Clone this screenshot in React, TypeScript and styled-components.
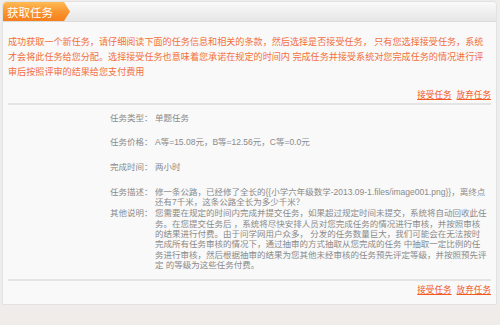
import React from "react";
import styled, { createGlobalStyle } from "styled-components";

const GlobalStyle = createGlobalStyle`
  html, body {
    margin: 0;
    padding: 0;
    background: #fff;
  }
  body {
    font-family: "Liberation Sans", "Noto Sans CJK SC", sans-serif;
  }
`;

const Page = styled.div`
  width: 500px;
  height: 325px;
  display: flex;
  flex-direction: column;
  background: #f0ecea;
  overflow: hidden;
`;

const Panel = styled.div`
  margin: 1px 3px 0 2px;
  border: 1px solid #e2e2e2;
  border-radius: 4px 4px 0 0;
  background: #f9f9f9;
  padding-bottom: 8px;
`;

const Header = styled.div`
  height: 19px;
  display: flex;
  align-items: stretch;
  background: linear-gradient(#fafafa, #e6e6e6);
  border-bottom: 1px solid #dcdcdc;
  border-radius: 4px 4px 0 0;
`;

const Tab = styled.div`
  width: 67px;
  padding-left: 4px;
  box-sizing: border-box;
  display: flex;
  align-items: center;
  color: #fff;
  font-size: 11.5px;
  background: linear-gradient(#fdbb55, #fa9630 50%, #f67e1c);
  clip-path: polygon(0 0, 61px 0, 67px 50%, 61px 100%, 0 100%);
  border-top-left-radius: 4px;
`;

const Intro = styled.p`
  margin: 0;
  padding: 13px 6px 0 5px;
  color: #f26f3c;
  font-size: 9.1px;
  line-height: 15px;
  white-space: nowrap;
`;

const Actions = styled.div`
  display: flex;
  justify-content: flex-end;
  gap: 5px;
  margin: 0 5px;
  padding: 9px 0 2px;
  border-bottom: 2px solid #e4e4e4;
`;

const ActionsBottom = styled.div`
  display: flex;
  justify-content: flex-end;
  gap: 5px;
  margin: 0 5px;
  padding-top: 3px;
  border-top: 2px solid #e4e4e4;
`;

const LinkText = styled.a`
  color: #f15a22;
  font-size: 8.6px;
  line-height: 12px;
  text-decoration: underline;
  cursor: pointer;
`;

const Fields = styled.div`
  display: flex;
  flex-direction: column;
  padding: 8px 6px 9px 107px;
`;

const Row = styled.div<{ $gap: number }>`
  display: flex;
  margin-bottom: ${(p) => p.$gap}px;
  font-size: 8.5px;
  line-height: 10.3px;
  color: #8a8a8a;
`;

const Label = styled.div`
  width: 45px;
  flex-shrink: 0;
  white-space: nowrap;
`;

const Value = styled.div`
  flex: 1;
`;

const Line = styled.div`
  white-space: nowrap;
`;

const notes = [
  "您需要在规定的时间内完成并提交任务，如果超过规定时间未提交，系统将自动回收此任",
  "务。在您提交任务后 ，系统将尽快安排人员对您完成任务的情况进行审核，并按照审核",
  "的结果进行付费。由于问学网用户众多， 分发的任务数量巨大，我们可能会在无法按时",
  "完成所有任务审核的情况下，通过抽审的方式抽取从您完成的任务 中抽取一定比例的任",
  "务进行审核，然后根据抽审的结果为您其他未经审核的任务预先评定等级，并按照预先评",
  "定 的等级为这些任务付费。",
];

const fields: { label: string; value: React.ReactNode; gap: number }[] = [
  { label: "任务类型：", value: "单题任务", gap: 14 },
  { label: "任务价格：", value: "A等=15.08元，B等=12.56元，C等=0.0元", gap: 14 },
  { label: "完成时间：", value: "两小时", gap: 15 },
  {
    label: "任务描述：",
    value:
      "修一条公路，已经修了全长的{{小学六年级数学-2013.09-1.files/image001.png}}，离终点还有7千米，这条公路全长为多少千米？",
    gap: 1,
  },
  {
    label: "其他说明：",
    value: notes.map((l) => <Line key={l}>{l}</Line>),
    gap: 0,
  },
];

function TaskLinks() {
  return (
    <>
      <LinkText>接受任务</LinkText>
      <LinkText>放弃任务</LinkText>
    </>
  );
}

export default function App() {
  return (
    <Page>
      <GlobalStyle />
      <Panel>
        <Header>
          <Tab>获取任务</Tab>
        </Header>
        <Intro>
          成功获取一个新任务，请仔细阅读下面的任务信息和相关的条款，然后选择是否接受任务， 只有您选择接受任务，系统
          <br />
          才会将此任务给您分配。选择接受任务也意味着您承诺在规定的时间内 完成任务并接受系统对您完成任务的情况进行评
          <br />
          审后按照评审的结果给您支付费用
        </Intro>
        <Actions>
          <TaskLinks />
        </Actions>
        <Fields>
          {fields.map((f) => (
            <Row key={f.label} $gap={f.gap}>
              <Label>{f.label}</Label>
              <Value>{f.value}</Value>
            </Row>
          ))}
        </Fields>
        <ActionsBottom>
          <TaskLinks />
        </ActionsBottom>
      </Panel>
    </Page>
  );
}
